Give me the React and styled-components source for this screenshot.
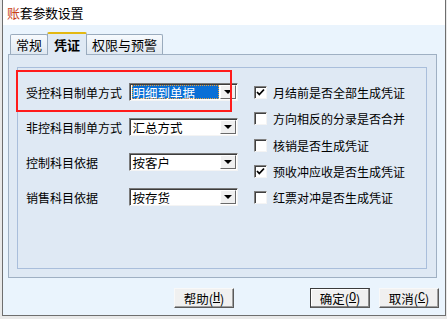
import React from 'react';
import styled, { createGlobalStyle } from 'styled-components';

const Global = createGlobalStyle`
  html, body {
    margin: 0;
    padding: 0;
    background: #e9e9e9;
  }
  body {
    font-family: "Noto Sans CJK SC", "Liberation Sans", sans-serif;
    font-size: 12px;
    color: #000;
  }
`;

const Window = styled.div`
  margin-left: 2px;
  width: 442px;
  height: 315px;
  border: 1px solid #6e6e6e;
  border-top: none;
  display: flex;
  flex-direction: column;
  background: #eaf4fd;
`;

const TitleBar = styled.div`
  height: 25px;
  background: #fff;
  display: flex;
  align-items: center;
  padding-left: 4px;
  font-size: 13px;
  letter-spacing: -0.3px;
`;

const Accent = styled.span`
  color: #c8401a;
`;

const Body = styled.div`
  flex: 1;
  padding: 6px 6px 0 5px;
  display: flex;
  flex-direction: column;
`;

const TabStrip = styled.div`
  display: flex;
  align-items: flex-end;
  height: 23px;
  padding-left: 2px;
  position: relative;
  z-index: 1;
`;

const Tab = styled.div`
  height: ${({ active }) => (active ? '23px' : '20px')};
  padding: 0 ${({ active }) => (active ? '6px' : '5px')};
  box-sizing: border-box;
  display: flex;
  align-items: center;
  border: 1px solid #9aabbd;
  border-bottom: none;
  border-top: ${({ active }) => (active ? '2px solid #e3b812' : '1px solid #9aabbd')};
  border-radius: 2px 2px 0 0;
  margin-right: -1px;
  background: ${({ active }) =>
    active ? '#dfe9f4' : 'linear-gradient(#f7fafd, #dfe8f1)'};
  font-weight: ${({ active }) => (active ? 'bold' : 'normal')};
  font-size: 13px;
  margin-bottom: ${({ active }) => (active ? '-1px' : '0')};
  position: relative;
`;

const Panel = styled.div`
  height: 224px;
  box-sizing: border-box;
  border: 1px solid #9fb0c3;
  background: #dfe9f4;
  margin-right: 2px;
  padding: 12px 9px 8px 8px;
  display: flex;
`;

const Group = styled.div`
  flex: 1;
  border: 1px solid #a9bedb;
  display: flex;
  padding: 15px 0 0 8px;
  position: relative;
`;

const LeftCol = styled.div`
  display: flex;
  flex-direction: column;
  gap: 17px;
  width: 212px;
`;

const Row = styled.div`
  display: flex;
  align-items: center;
  height: 18px;
`;

const Label = styled.div`
  width: 103px;
  white-space: nowrap;
`;

const Combo = styled.div`
  width: 110px;
  height: 18px;
  box-sizing: border-box;
  background: #fff;
  border-top: 1px solid #7a7a7a;
  border-left: 1px solid #7a7a7a;
  border-right: 1px solid #f4f4f4;
  border-bottom: 1px solid #f4f4f4;
  box-shadow: inset 1px 1px 0 #3c3c3c;
  display: flex;
  align-items: center;
  padding: 1px 1px 1px 2px;
`;

const ComboText = styled.div`
  flex: 1;
  height: 14px;
  display: flex;
  align-items: center;
  padding-left: 1px;
  white-space: nowrap;
  font-size: 12.5px;
  ${({ selected }) =>
    selected &&
    `
    background: #0a6fd6;
    color: #fff;
    outline: 1px dotted #e6a040;
    outline-offset: -1px;
  `}
`;

const DropButton = styled.div`
  width: 16px;
  height: 14px;
  margin-left: 1px;
  box-sizing: border-box;
  background: #f0f0f0;
  border-top: 1px solid #fff;
  border-left: 1px solid #fff;
  border-right: 1px solid #6a6a6a;
  border-bottom: 1px solid #6a6a6a;
  display: flex;
  align-items: center;
  justify-content: center;
  &::after {
    content: '';
    border-left: 4px solid transparent;
    border-right: 4px solid transparent;
    border-top: 4px solid #000;
  }
`;

const Highlight = styled.div`
  position: absolute;
  left: -2px;
  top: 2px;
  width: 212px;
  height: 38px;
  border: 2px solid #ff1b1b;
  pointer-events: none;
`;

const RightCol = styled.div`
  margin-left: 16px;
  padding-top: 3px;
  display: flex;
  flex-direction: column;
  gap: 13.3px;
`;

const CheckRow = styled.div`
  display: flex;
  align-items: center;
  height: 13px;
  white-space: nowrap;
`;

const Box = styled.div`
  width: 13px;
  height: 13px;
  box-sizing: border-box;
  background: #fff;
  border-top: 1px solid #808080;
  border-left: 1px solid #808080;
  border-right: 1px solid #f4f4f4;
  border-bottom: 1px solid #f4f4f4;
  box-shadow: inset 1px 1px 0 #404040;
  margin-right: 6px;
  display: flex;
  align-items: center;
  justify-content: center;
`;

const Footer = styled.div`
  display: flex;
  align-items: center;
  padding: 10px 0 0 166px;
`;

const Button = styled.div`
  width: 60px;
  height: 20px;
  box-sizing: border-box;
  background: #f0f0f0;
  border: 1px solid ${({ primary }) => (primary ? '#3c3c3c' : '#f8f8f8')};
  border-right-color: #5a5a5a;
  border-bottom-color: #5a5a5a;
  box-shadow: ${({ primary }) =>
    primary ? 'inset -1px -1px 0 #8a8a8a, inset 1px 1px 0 #fff' : 'inset -1px -1px 0 #a0a0a0'};
  display: flex;
  align-items: center;
  justify-content: center;
  font-size: 12.5px;
  margin-left: ${({ gap }) => gap || 0};
  & u {
    font-family: "Liberation Mono", monospace;
    font-size: 12px;
  }
`;

function Check() {
  return (
    <svg width="9" height="9" viewBox="0 0 9 9">
      <path d="M1 4 L3.3 6.5 L8 1.5" stroke="#000" strokeWidth="1.8" fill="none" />
    </svg>
  );
}

const leftRows = [
  { label: '受控科目制单方式', value: '明细到单据', selected: true },
  { label: '非控科目制单方式', value: '汇总方式' },
  { label: '控制科目依据', value: '按客户' },
  { label: '销售科目依据', value: '按存货' },
];

const checks = [
  { text: '月结前是否全部生成凭证', on: true },
  { text: '方向相反的分录是否合并', on: false },
  { text: '核销是否生成凭证', on: false },
  { text: '预收冲应收是否生成凭证', on: true },
  { text: '红票对冲是否生成凭证', on: false },
];

export default function App() {
  return (
    <>
      <Global />
      <Window>
        <TitleBar>
          <Accent>账</Accent>套参数设置
        </TitleBar>
        <Body>
          <TabStrip>
            <Tab>常规</Tab>
            <Tab active>凭证</Tab>
            <Tab>权限与预警</Tab>
          </TabStrip>
          <Panel>
            <Group>
              <Highlight />
              <LeftCol>
                {leftRows.map((r) => (
                  <Row key={r.label}>
                    <Label>{r.label}</Label>
                    <Combo>
                      <ComboText selected={r.selected}>{r.value}</ComboText>
                      <DropButton />
                    </Combo>
                  </Row>
                ))}
              </LeftCol>
              <RightCol>
                {checks.map((c) => (
                  <CheckRow key={c.text}>
                    <Box>{c.on && <Check />}</Box>
                    {c.text}
                  </CheckRow>
                ))}
              </RightCol>
            </Group>
          </Panel>
          <Footer>
            <Button>
              帮助(<u>H</u>)
            </Button>
            <Button primary gap="76px">
              确定(<u>O</u>)
            </Button>
            <Button gap="9px">
              取消(<u>C</u>)
            </Button>
          </Footer>
        </Body>
      </Window>
    </>
  );
}
